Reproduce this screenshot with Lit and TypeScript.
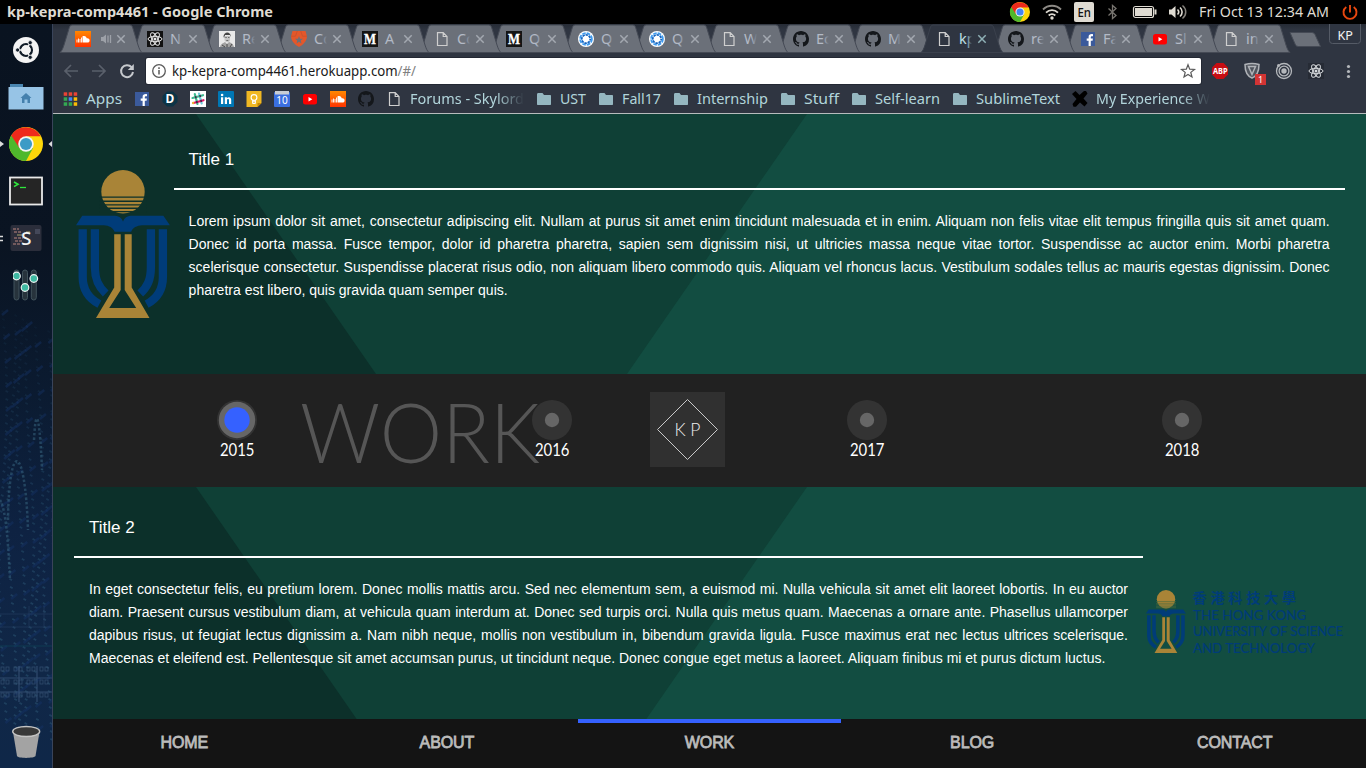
import { LitElement, html, svg, css } from "lit";
import { customElement } from "lit/decorators.js";

const UI = "'Noto Sans', 'Open Sans', sans-serif";

/* A single line of UI text fitted to a known advance width. */
const label = (t: unknown, w: number, size: number, fill: string, weight = 400, h = 22, base = 16) => html`
  <svg class="g" width=${w} height=${h} viewBox="0 0 ${w} ${h}">
    <text x="0" y=${base} font-family=${UI} font-size=${size} font-weight=${weight} fill=${fill}
      textLength=${w} lengthAdjust="spacingAndGlyphs">${t}</text>
  </svg>`;

const box = (w: number, h: number, body: unknown, vb = `0 0 ${w} ${h}`) =>
  html`<svg class="g" width=${w} height=${h} viewBox=${vb}>${body}</svg>`;

/* ---------- 16x16 glyphs ---------- */
const soundcloud = svg`<rect width="16" height="16" fill="url(#sc)"/>
  <path d="M2 8.5v3M3.5 7.5v4M5 8v3.500M6.500 6.500v5" stroke="#fff" stroke-width=".9"/>
  <path d="M7.500 5.300C10 4 11.500 6 11.700 7.300C13.500 6.800 14.600 8 14.600 9.400C14.600 10.700 13.700 11.500 12.600 11.500H7.500Z" fill="#fff"/>`;
const atom = (c: string) => svg`<g fill="none" stroke=${c} stroke-width="1">
  <ellipse cx="8" cy="8" rx="7" ry="2.700"/>
  <ellipse cx="8" cy="8" rx="7" ry="2.700" transform="rotate(60 8 8)"/>
  <ellipse cx="8" cy="8" rx="7" ry="2.700" transform="rotate(120 8 8)"/></g><circle cx="8" cy="8" r="1.500" fill=${c}/>`;
const reactIcon = svg`<rect width="16" height="16" fill="#111"/>${atom("#e8e8e8")}`;
const portrait = svg`<rect width="16" height="16" fill="#e9e9e9"/>
  <path d="M4.500 6C4.500 0 12 0 12 6L11 4H6L5.500 7Z" fill="#444"/>
  <path d="M5.500 5H11V9C11 12 6.500 12 5.500 9Z" fill="#c4c4c4"/>
  <path d="M6.300 6.500h1.500M9 6.500h1.500M7.300 9.500h2" stroke="#555" stroke-width=".8"/>
  <path d="M1 16C2 12 5 12 6 11L8 13L10 11C12 12 14 12 15 16Z" fill="#a2a2a2"/><path d="M8 13V16M3 14l3 2M13 13l-2 3" stroke="#333" stroke-width=".8"/>`;
const auth0 = svg`<path d="M1.500 0H14.500L16 5.500C15.500 10.500 12 13.800 8 16C4 13.800 .5 10.500 0 5.500Z" fill="#e4572a"/>
  <path d="M8 5L9 7.800H12L9.700 9.600L10.500 12.400L8 10.700L5.500 12.400L6.300 9.600L4 7.800H7Z" fill="#6b7079"/>
  <path d="M6.300 0L4.500 5.200H0M9.700 0L11.500 5.200H16" fill="none" stroke="#b8512f" stroke-width=".6"/>`;
const medium = svg`<rect width="16" height="16" fill="#141414"/>
  <text x="2" y="13" font-family="'Liberation Serif', serif" font-weight="700" font-size="14" fill="#fff" stroke="#fff" stroke-width=".3" textLength="12" lengthAdjust="spacingAndGlyphs">M</text>`;
const file = svg`<path d="M3.500 1.700H9.200L13 5.500V14.500H3.500Z M9.200 1.700V5.500H13" fill="none" stroke="#cfcfcf" stroke-width="1.200"/>`;
const quokka = svg`<circle cx="8" cy="8" r="8" fill="#fff"/>
  <circle cx="8" cy="8" r="5.900" fill="none" stroke="#3d9bf0" stroke-width="1.800" stroke-dasharray="3.600 1.030"/>
  <circle cx="8" cy="8" r="4.200" fill="none" stroke="#1565c0" stroke-width="1.700" stroke-dasharray="2.500 .8" stroke-dashoffset="1"/>`;
const github = svg`<path fill="#14171b" d="M8 0C3.580 0 0 3.580 0 8c0 3.540 2.290 6.530 5.470 7.590.4.070.55-.17.55-.38 0-.19-.01-.82-.01-1.490-2.010.37-2.530-.49-2.690-.94-.09-.23-.48-.94-.82-1.130-.28-.15-.68-.52-.01-.53.63-.01 1.080.58 1.230.82.72 1.210 1.870.87 2.330.66.07-.52.28-.87.51-1.070-1.780-.2-3.640-.89-3.640-3.950 0-.87.31-1.590.82-2.150-.08-.2-.36-1.020.08-2.120 0 0 .67-.21 2.200.82.64-.18 1.320-.27 2-.27s1.360.09 2 .27c1.530-1.040 2.200-.82 2.200-.82.44 1.100.16 1.920.08 2.120.51.56.82 1.270.82 2.150 0 3.070-1.870 3.750-3.650 3.950.29.25.54.73.54 1.480 0 1.070-.01 1.930-.01 2.200 0 .21.15.46.55.38A8.010 8.010 0 0 0 16 8c0-4.420-3.580-8-8-8Z"/>`;
const facebook = svg`<rect x="1" y="1" width="14" height="14" fill="#3b5a9b"/>
  <path d="M10.800 15V9.800H12.600L12.900 7.600H10.800V6.300C10.800 5.600 11.100 5.200 12 5.200H13V3.200C10.500 2.800 8.600 3.500 8.600 6V7.600H6.700V9.800H8.600V15Z" fill="#fff"/>`;
const youtube = svg`<rect x="1" y="3" width="14" height="10.500" rx="2.500" fill="#f00"/><path d="M6.500 6V10.500L10.300 8.250Z" fill="#fff"/>`;
const disqus = svg`<path d="M5 .5H11L15.500 5V11L11 15.500H5L.5 11V5Z" fill="#0c3446"/>
  <text x="8" y="12.300" text-anchor="middle" font-family=${UI} font-size="12" font-weight="700" fill="#fff">D</text>`;
const slack = svg`<rect width="16" height="16" fill="#fff"/><g stroke-width="2.200" stroke-linecap="round">
  <path d="M4.800 3L7.500 13" stroke="#3eb991"/><path d="M9 2.500L11.700 12.500" stroke="#70cadb"/>
  <path d="M2.500 7L13 4.200" stroke="#3eb991"/><path d="M3.500 12L13.500 9.200" stroke="#e01563"/></g>
  <path d="M5 6.400L6.500 6M9.400 5.200L10.900 4.800M6 11.300L7.700 10.900M10.400 10.100L11.900 9.700" stroke="#472a49" stroke-width="2.200"/>
  <circle cx="3.200" cy="12" r="1.200" fill="#ecb32d"/>`;
const linkedin = svg`<rect width="16" height="16" rx="1" fill="#0077b5"/>
  <path d="M3 6.200H5.200V13H3ZM6.800 6.200H8.900V7.200C10 5.500 13.200 5.700 13.200 8.800V13H11V9.300C11 7.400 9 7.500 9 9.300V13H6.800Z" fill="#fff"/><circle cx="4.100" cy="4" r="1.300" fill="#fff"/>`;
const keep = svg`<path d="M.5 0H15.500V12L11.500 16H.5Z" fill="#f0b823"/><path d="M15.500 12H11.500V16Z" fill="#c98a00"/>
  <circle cx="8" cy="6.500" r="2.900" fill="none" stroke="#fff" stroke-width="1.100"/><path d="M6.600 9.200V12.500H9.400V9.200M6.600 10.800H9.400" fill="none" stroke="#fff" stroke-width="1"/>`;
const calendar = svg`<rect x="0" y="1" width="16" height="15" rx="1" fill="#3a6fe0"/><rect x="1" y="0" width="14" height="3.500" fill="#c9cdd4"/>
  <text x="8" y="12.700" text-anchor="middle" font-family=${UI} font-size="10" fill="#fff">10</text>`;
const folder = svg`<path d="M1 3.500C1 2.500 1.500 2 2.500 2H6.500L8 4H14C14.700 4 15 4.400 15 5V13C15 13.700 14.700 14 14 14H2C1.300 14 1 13.700 1 13Z" fill="#95b7c0"/>`;
const cross = svg`<path d="M0 3L3.500 0L7.500 4L12 0H14L15.500 2.500L11.500 7.500L15.500 12L12.500 15.500L8 11.500L4 15.800H1.500L.5 13L4.500 8Z" fill="#000"/>`;
const grid = svg`${[0, 1, 2].map((r) => [0, 1, 2].map((c) => svg`<rect x=${1.7 + c * 5} y=${1.3 + r * 5} width="3.500" height="3.500"
  fill=${[["#ea4335", "#ea4335", "#ea4335"], ["#34a853", "#4285f4", "#fbbc05"], ["#34a853", "#34a853", "#fbbc05"]][r][c]}/>`))}`;

const chromeIcon = (size: number, core: string) => box(size, size, svg`
  <circle cx="16" cy="16" r="16" fill="#fdd60a"/>
  <path d="M16 16L2.100 8A16 16 0 0 0 16 32L22.500 20Z" fill="#4fb82c"/>
  <path d="M2.100 8A16 16 0 0 1 29.900 8.800H16L9.800 19.800Z" fill="#ee2a1c"/>
  <circle cx="16" cy="16" r="7.300" fill="#f4f4f4"/><circle cx="16" cy="16" r="5.700" fill=${core}/>`, "0 0 32 32");

/* University emblem, drawn on its own 94x148 field. */
const emblem = (w: number, h: number, stripe: string) => box(w, h, svg`
  <g transform="translate(-76.300 -170)">
    <circle cx="123.300" cy="191.800" r="21.700" fill="#a98437"/>
    <path d="M100 197.100H147M100 201.300H147M100 204.900H147M100 208.300H147M100 211.600H147" stroke=${stripe} stroke-width="1.400"/>
    <path d="M82.500 215.800H115.500C119 216 122 218 123.300 221.500C124.600 218 127.600 216 131 215.800H163.700L170.200 225.300H142.500C137 225.700 133 227.700 131.500 231.700H114.800C113.300 227.700 109.500 225.700 104 225.300H76.300Z" fill="#003c79"/>
    <g fill="none" stroke="#003c79" stroke-width="8.300">
      <path d="M83 229.300V277C83 290 90 299 99.700 304.200"/><path d="M95.200 229.300V267C95.200 280 99 287 106 293.500"/>
      <path d="M163.200 229.300V277C163.200 290 156.600 299 146.900 304.200"/><path d="M151.200 229.300V267C151.200 280 147.600 287 140.600 293.500"/>
    </g>
    <path d="M114.500 234.300H121V290L109.500 308H136.500L125 290V234.300H132V287.500L149.800 318H96.300L114.500 287.500Z" fill="#a98437"/>
  </g>`, "0 0 94 148");

const tabs: [unknown, string][] = [
  [soundcloud, ""], [reactIcon, "N"], [portrait, "Re"], [auth0, "Co"], [medium, "A"], [file, "Co"], [medium, "Q"],
  [quokka, "Q"], [quokka, "Q"], [file, "W"], [github, "Ec"], [github, "M"], [file, "kp"], [github, "re"],
  [facebook, "Fa"], [youtube, "Sl"], [file, "in"],
];

const marks: [unknown, string, number][] = [
  [grid, "Apps", 36], [facebook, "", 0], [disqus, "", 0], [slack, "", 0], [linkedin, "", 0], [keep, "", 0],
  [calendar, "", 0], [youtube, "", 0], [soundcloud, "", 0], [github, "", 0], [file, "Forums - Skylord", 114],
  [folder, "UST", 26], [folder, "Fall17", 39], [folder, "Internship", 71], [folder, "Stuff", 35],
  [folder, "Self-learn", 65], [folder, "SublimeText", 84], [cross, "My Experience W", 114],
];

@customElement("desktop-bar")
class DesktopBar extends LitElement {
  static styles = css`
    :host { display: flex; justify-content: space-between; align-items: center; height: 24px; background: #000; padding: 0 8px 0 7px; }
    .g { display: block; flex: none; overflow: visible; }
    .tray { display: flex; align-items: center; gap: 12px; }
  `;
  render() {
    return html`${label("kp-kepra-comp4461 - Google Chrome", 266, 14.5, "#dfdbd2", 700, 24, 17)}
      <div class="tray">
        ${chromeIcon(20, "#4285f4")}
        ${box(20, 18, svg`<g fill="none" stroke="#dfdbd2" stroke-width="1.800"><path d="M1 6.500C6 1.500 14 1.500 19 6.500" stroke="#8d8a85"/><path d="M4 9.700C7.500 6.300 12.500 6.300 16 9.700"/><path d="M6.700 12.500C8.500 10.700 11.500 10.700 13.300 12.500"/></g><circle cx="10" cy="15" r="1.700" fill="#dfdbd2"/>`)}
        ${box(20, 20, svg`<rect width="20" height="20" rx="2" fill="#dfdbd2"/><text x="3.500" y="15" font-family=${UI} font-size="13" font-weight="500" fill="#111" textLength="13.500" lengthAdjust="spacingAndGlyphs">En</text>`)}
        ${box(13, 16, svg`<path d="M2.500 4.500L10 11.500L6.500 14.500V1.500L10 4.500L2.500 11.500" fill="none" stroke="#77746f" stroke-width="1.300"/>`)}
        ${box(26, 14, svg`<rect x="2.500" y="1.500" width="20" height="11" rx="2" fill="none" stroke="#dfdbd2" stroke-width="1.200"/><rect x="4" y="3" width="17" height="8" fill="#dfdbd2"/><rect x="23.500" y="4.500" width="2" height="5" fill="#dfdbd2"/>`)}
        ${box(18, 16, svg`<path d="M0 5.500H2.500L6.500 2V14L2.500 10.500H0Z" fill="#dfdbd2"/><path d="M8.500 5.500C10 7 10 9 8.500 10.500M11 3.500C13.800 6 13.800 10 11 12.500" fill="none" stroke="#dfdbd2" stroke-width="1.600"/><path d="M13.500 1.500C17.800 5 17.800 11 13.500 14.500" fill="none" stroke="#85827c" stroke-width="1.500"/>`)}
        ${label("Fri Oct 13 12:34 AM", 130, 14.5, "#dfdbd2", 400, 24, 17)}
        ${box(17, 17, svg`<path d="M5.300 3A6.500 6.500 0 1 0 12.700 3M9 1V8.500" fill="none" stroke="#e8470f" stroke-width="1.900"/>`)}
      </div>`;
  }
}

@customElement("launcher-dock")
class LauncherDock extends LitElement {
  static styles = css`
    :host { display: flex; flex-direction: column; box-sizing: border-box; width: 53px; border-right: 1px solid #39445a; padding: 2px 0 3px;
      position: relative; overflow: hidden;
      background: linear-gradient(#091320 0%, #0a1422 30%, #0b1b31 50%, #0e2242 68%, #102747 86%, #0f2748 100%); }
    .g { display: block; }
    .slot { height: 47px; display: flex; align-items: center; justify-content: center; position: relative; z-index: 1; }
    .grow { flex: 1; }
    .wall { position: absolute; left: 0; top: 0; }
  `;
  render() {
    const dots = [];
    for (let c = 0; c < 7; c++) {
      for (let r = 0; r < 52; r++) {
        const y = 310 + r * 8 + c * 4;
        const x = (c * 9 + Math.sin(r / 7 + c * 1.3) * 4 + 2).toFixed(1);
        dots.push(svg`<rect x=${x} y=${y} width="3" height="1.800" fill="#28506e" opacity=${(Math.min(0.6, 0.1 + r / 70)).toFixed(2)} transform="rotate(30 ${x} ${y})"/>`);
        if ((r + c) % 3 === 0) dots.push(svg`<path d="M${x} ${y + 5}l6 -5" stroke="#16356b" stroke-width="2.500" opacity=".4"/>`);
      }
    }
    const cells = [0, 1, 2, 3].map((c) => [0, 1, 2].map((r) => svg`<rect x=${1 + c * 13} y=${647 + r * 13} width="3" height="4"/><rect x=${6 + c * 13} y=${647 + r * 13} width="3" height="4"/>`));
    return html`
      <svg class="wall" width="52" height="744" viewBox="0 24 52 744">
        ${dots}
        <path d="M8 520C9 440 25 440 28 530M34 440C36 400 40 420 42 470M0 500C6 510 8 540 10 580" fill="none" stroke="#3a6a84" stroke-width="2.500" stroke-dasharray="2.500 2" opacity=".5"/>
        <path d="M0 678H52M0 692H52M19 666V702M37 666V702" stroke="#3a567b" stroke-width="1.200" opacity=".75"/>
        <path d="M0 614H52M0 627H52M29 606V628M44 606V628" stroke="#2b4468" opacity=".5"/>
        <path d="M0 646H52" stroke="#0f4a5a" opacity=".6"/>
        <g fill="none" stroke="#3d5a7c" stroke-width=".8" opacity=".7" transform="translate(0 20)">${cells}</g>
        <path d="M0 141L4 144L0 147ZM52 141L48.500 144L52 147Z" fill="#dcdcdc"/>
        <path d="M0 236.500H3M0 240.500H3" stroke="#dcdcdc" stroke-width="1.500"/>
      </svg>
      <div class="slot">${box(26, 26, svg`<circle cx="13" cy="13" r="13" fill="#f4f4f4"/><circle cx="13" cy="13" r="5.900" fill="none" stroke="#111c28" stroke-width="2.300"/>
        <path d="M13 13L4 13M13 13L17.500 5.200M13 13L17.500 20.800" stroke="#f4f4f4" stroke-width="1.500"/><circle cx="13" cy="13" r="4.700" fill="#f4f4f4"/>
        <g fill="#111c28" stroke="#f4f4f4" stroke-width=".8"><circle cx="4.600" cy="13" r="2.100"/><circle cx="17.200" cy="5.700" r="2.100"/><circle cx="17.200" cy="20.300" r="2.100"/></g>`)}</div>
      <div class="slot">${box(36, 28, svg`<path d="M2 1H15V6H2Z" fill="#4a86b0"/><rect x=".5" y="4" width="35" height="22.500" fill="#97c4e6"/><path d="M18 10L23.500 15H22V20H19.500V16.500H16.500V20H14V15H12.500Z" fill="#4580ad"/>`)}</div>
      <div class="slot">${chromeIcon(34, "#3c9bc6")}</div>
      <div class="slot">${box(34, 30, svg`<rect x="1" y="1.500" width="32" height="27" fill="#252525" stroke="#e9e9e9" stroke-width="1.800"/><path d="M5 6L9 8.300L5 10.600" fill="none" stroke="#2ee63c" stroke-width="1.600"/><path d="M11 11.500H17" stroke="#2ee63c" stroke-width="1.300"/>`)}</div>
      <div class="slot">${box(32, 28, svg`<rect x=".5" y="1" width="31" height="26" rx="2" fill="#2b2e3b"/><path d="M3 5H9M4 8H12M4 14H13M5 17H12M3 20H11" stroke="#8c6a6a" stroke-width="1.500" stroke-dasharray="3 1"/><path d="M7 11H12M16 8H20" stroke="#a9a26c"/><rect x="25" y="5" width="5" height="5" fill="#444859"/><text x="11" y="21" font-family=${UI} font-weight="500" font-size="18.500" fill="#f2f2f2" textLength="10.500" lengthAdjust="spacingAndGlyphs">S</text>`)}</div>
      <div class="slot">${box(26, 32, svg`<g transform="translate(-.5 0)"><g fill="#27333c" stroke="#41535c"><rect x="1.500" y="1" width="5" height="30" rx="2.500"/><rect x="10" y="1" width="5" height="30" rx="2.500"/><rect x="18.800" y="1" width="5" height="30" rx="2.500"/></g><g fill="#3fb9a2" stroke="#eef4f2" stroke-width="1.200"><circle cx="4" cy="7" r="3.800"/><circle cx="12.500" cy="18.500" r="3.800"/><circle cx="21.300" cy="9.500" r="3.800"/></g></g>`)}</div>
      <div class="grow"></div>
      <div class="slot">${box(30, 34, svg`<path d="M2 7L6 31C7 33.500 23 33.500 24.500 31L28.500 7Z" fill="#a3a3a3"/><ellipse cx="15.200" cy="6.500" rx="13.500" ry="5" fill="#383838" stroke="#c4c4c4" stroke-width="1.400"/>`)}</div>`;
  }
}

@customElement("browser-chrome")
class BrowserChrome extends LitElement {
  static styles = css`
    :host { display: block; box-sizing: border-box; height: 90px; background: #2f3541; border-bottom: 1px solid #b7bcbd; overflow: hidden; }
    .g { display: block; flex: none; overflow: visible; }
    .strip { display: flex; height: 29px; padding-left: 7.300px; background: linear-gradient(#262b35, #2f3541 6px); }
    .tab { position: relative; margin-right: -10.250px; }
    .tools { display: flex; height: 36px; align-items: center; }
    .nav { display: flex; gap: 12px; width: 93px; padding-left: 10px; box-sizing: border-box; }
    .omni { display: flex; align-items: center; justify-content: space-between; box-sizing: border-box; width: 1055px; height: 26px; padding: 0 5px 0 5px;
      background: #fff; border-radius: 2px; box-shadow: 0 0 0 1px #232833; }
    .url { display: flex; align-items: center; gap: 5px; }
    .path { fill: #808080; }
    .ext { display: flex; gap: 8px; padding-left: 7px; }
    .marks { display: flex; gap: 12px; align-items: center; height: 20px; padding-left: 9px; }
    .mark { display: flex; gap: 8px; align-items: center; }
    .fade { -webkit-mask-image: linear-gradient(90deg, #000 75%, transparent 100%); mask-image: linear-gradient(90deg, #000 75%, transparent 100%); }
  `;
  render() {
    return html`
      <div class="strip">
        ${tabs.map(([icon, t], i) => {
          const on = i === 12;
          return html`<svg class="g tab" style="z-index:${on ? 30 : i > 12 ? 16 - i + 5 : 20 - i}" width="82" height="29" viewBox="0 0 82 29">
            <defs>
              <linearGradient id="sc" x1="0" y1="0" x2="0" y2="1"><stop offset="0" stop-color="#ff8800"/><stop offset="1" stop-color="#ff3300"/></linearGradient>
              <linearGradient id=${on ? "tf-on" : "tf"} gradientUnits="userSpaceOnUse" x1="38" x2="51" y1="0" y2="0"><stop offset=".55" stop-color=${on ? "#bfe0e6" : "#b3bac6"}/><stop offset="1" stop-color=${on ? "#bfe0e6" : "#b3bac6"} stop-opacity="0"/></linearGradient>
            </defs>
            <path d="M0 28.500C2 27 3 24 4 21L9.500 3Q10.300 1 12 1H70Q71.700 1 72.500 3L78 21C79 24 80 27 82 28.500Z" fill=${on ? "#2f3541" : "#6b7079"} stroke=${on ? "#3b414d" : "#454a55"} stroke-width="1"/>
            <g transform="translate(15 7)">${icon}</g>
            ${t ? svg`<text x="38" y="20" font-family=${UI} font-size="14.500" fill=${on ? "url(#tf-on)" : "url(#tf)"}>${t}</text>`
                : svg`<path d="M41 13H43L46 10.500V19.500L43 17H41Z" fill="#9da1a8"/><path d="M48 11.500V18.500M50.500 11V19" stroke="#9da1a8" stroke-width="1.300"/>`}
            <path d="M57.300 11.300L64.700 18.700M64.700 11.300L57.300 18.700" stroke=${on ? "#8fb0b6" : "#a3a8b0"} stroke-width="1.500"/>
          </svg>`;
        })}
        ${box(90, 29, svg`<path d="M10 8.500H32Q34 8.500 35 10.500L40.500 22.500H18.500Q16.500 22.500 15.500 21Z" fill="#6b7079" stroke="#454a55"/>
          <rect x="49.500" y="-3" width="31" height="22.500" rx="3" fill="#2f3541" stroke="#555b66"/>
          <text x="57.500" y="16" font-family=${UI} font-size="12" fill="#f2f2f2" textLength="15.500" lengthAdjust="spacingAndGlyphs">KP</text>`)}
      </div>
      <div class="tools">
        <div class="nav">
          ${box(16, 16, svg`<path d="M15 8H2M8 2L2 8L8 14" fill="none" stroke="#5a606b" stroke-width="1.700"/>`)}
          ${box(16, 16, svg`<path d="M1 8H14M8 2L14 8L8 14" fill="none" stroke="#5a606b" stroke-width="1.700"/>`)}
          ${box(16, 16, svg`<path d="M12.600 4.200A6 6 0 1 0 14 9" fill="none" stroke="#c6c9cd" stroke-width="2"/><path d="M14.800 1V7H8.800Z" fill="#c6c9cd"/>`)}
        </div>
        <div class="omni">
          <div class="url">
            ${box(16, 16, svg`<circle cx="8" cy="8" r="6.300" fill="none" stroke="#5a5a5a" stroke-width="1.300"/><path d="M8 7V11.500M8 4.300V5.900" stroke="#5a5a5a" stroke-width="1.500"/>`)}
            ${label(svg`kp-kepra-comp4461.herokuapp.com<tspan class="path">/#/</tspan>`, 244, 14.5, "#1a1a1a")}
          </div>
          ${box(16, 16, svg`<path d="M8 1.700L9.700 6.100L14.500 6.400L10.800 9.400L12 14L8 11.400L4 14L5.200 9.400L1.500 6.400L6.300 6.100Z" fill="none" stroke="#5a5a5a" stroke-width="1.200"/>`)}
        </div>
        <div class="ext">
          ${box(24, 28, svg`<path d="M8.500 6H15.500L20 10.500V17.500L15.500 22H8.500L4 17.500V10.500Z" fill="#c70d12"/><text x="5" y="17.200" font-family=${UI} font-size="9" font-weight="700" fill="#fff" textLength="14.500" lengthAdjust="spacingAndGlyphs">ABP</text>`)}
          ${box(24, 28, svg`<path d="M5 7.500Q12 5.500 19 7.500C19 14 17 19 12 21C7 19 5 14 5 7.500Z" fill="#50555e" stroke="#b0b3b8" stroke-width="1.500"/><path d="M8.500 9.500H15.500L12 17.500Z" fill="none" stroke="#b0b3b8" stroke-width="1.500"/><rect x="15" y="17" width="11" height="11" fill="#d23434"/><text x="18" y="26" font-family=${UI} font-size="9" fill="#fff">1</text>`)}
          ${box(24, 28, svg`<g fill="none" stroke="#b4b7bb" stroke-width="1.300"><circle cx="12" cy="14" r="7.500"/><circle cx="12" cy="14" r="4.900"/></g><circle cx="12" cy="14" r="2.700" fill="#b4b7bb"/><circle cx="6.500" cy="8.500" r="1.500" fill="#b4b7bb"/>`)}
          ${box(24, 28, svg`<rect x="4" y="6" width="16" height="16" fill="#262b35"/><g transform="translate(4 6)">${atom("#d7dadd")}</g>`)}
          ${box(24, 28, svg`<g fill="#b4b7bb"><circle cx="12.500" cy="9.500" r="1.600"/><circle cx="12.500" cy="14.500" r="1.600"/><circle cx="12.500" cy="19.500" r="1.600"/></g>`)}
        </div>
      </div>
      <div class="marks">
        ${marks.map(([icon, t, w]) => html`<div class="mark">${box(16, 16, icon)}${t ? html`<div class=${w === 114 ? "fade" : ""}>${label(t, w, 14.5, "#b2d5db")}</div>` : ""}</div>`)}
      </div>`;
  }
}

@customElement("portfolio-page")
class PortfolioPage extends LitElement {
  static styles = css`
    :host { display: flex; flex-direction: column; height: 654px; font-family: "Liberation Sans", Arial, sans-serif; color: #fff; }
    .g { display: block; flex: none; overflow: visible; }
    .panel { display: flex; position: relative; box-sizing: border-box; padding: 0 21px; overflow: hidden; background: #0f4036; }
    .first { height: 260px; }
    .second { height: 232px; }
    .backdrop { position: absolute; left: 0; top: 0; }
    .copy { flex: 1; position: relative; }
    .first .copy { padding-top: 30px; }
    .second .copy { padding-top: 25px; }
    .title { height: 44px; padding: 0 15px; line-height: 31px; font-size: 17px; border-bottom: 2px solid #fff; }
    .body { margin: 0; padding: 20px 15px 0; font-size: 14px; line-height: 23px; text-align: justify; }
    .first .title, .first .body { padding-left: 14.600px; padding-right: 15.400px; }
    .crest { position: relative; width: 100px; padding: 56px 0 0 2px; box-sizing: border-box; }
    .brand { position: relative; display: flex; gap: 6px; width: 202px; box-sizing: border-box; padding: 103px 0 0 3px; }
    .timeline { display: flex; position: relative; height: 113px; box-sizing: border-box; background: #212121; padding: 26px 0 0 26px; }
    .big { position: absolute; left: 240px; top: 15px; }
    .logo { position: absolute; left: 597px; top: 18px; }
    .stop { flex: none; width: 315px; display: flex; flex-direction: column; align-items: center; position: relative; }
    .tabs { display: grid; grid-template-columns: repeat(5, 1fr); height: 49px; background: #141414; }
    .tab { display: flex; align-items: center; justify-content: center; box-sizing: border-box; border-top: 4px solid transparent; padding-bottom: 5px;
      color: #bbb; font-size: 16px; letter-spacing: -.1px; -webkit-text-stroke: .8px #bbb; }
    .on { border-top-color: #3561ff; }
  `;
  backdrop() {
    return html`<svg class="g backdrop" width="1313" height="260" viewBox="0 0 1313 260">
      <path d="M0 0H143L323 260H0Z" fill="#0c302a"/>
      <path d="M754 0H1313V260H574Z" fill="#124d41"/>
    </svg>`;
  }
  render() {
    const years = ["2015", "2016", "2017", "2018"];
    const en: [string, number, number][] = [["THE HONG KONG", 113, 30], ["UNIVERSITY OF SCIENCE", 150, 46.3], ["AND TECHNOLOGY", 122, 62.5]];
    return html`
      <section class="panel first">
        ${this.backdrop()}
        <div class="crest">${emblem(94, 148, "#0c302a")}</div>
        <div class="copy">
          <div class="title">Title 1</div>
          <p class="body">Lorem ipsum dolor sit amet, consectetur adipiscing elit. Nullam at purus sit amet enim tincidunt malesuada et in enim. Aliquam non felis vitae elit tempus fringilla quis sit amet quam. Donec id porta massa. Fusce tempor, dolor id pharetra pharetra, sapien sem dignissim nisi, ut ultricies massa neque vitae tortor. Suspendisse ac auctor enim. Morbi pharetra scelerisque consectetur. Suspendisse placerat risus odio, non aliquam libero commodo quis. Aliquam vel rhoncus lacus. Vestibulum sodales tellus ac mauris egestas dignissim. Donec pharetra est libero, quis gravida quam semper quis.</p>
        </div>
      </section>
      <section class="timeline">
        <svg class="g big" width="260" height="90" viewBox="0 0 260 90">
          <text x="7" y="74" font-family="Lato, sans-serif" font-weight="300" font-size="83" fill="#565656" textLength="240" lengthAdjust="spacingAndGlyphs">WORK</text>
        </svg>
        <svg class="g logo" width="75" height="75" viewBox="0 0 75 75">
          <rect width="75" height="75" fill="#303030"/>
          <path d="M37.500 7.500L67.500 37.500L37.500 67.500L7.500 37.500Z" fill="none" stroke="#c8c8c8"/>
          <text x="24.500" y="43.500" font-family="Lato, sans-serif" font-weight="300" font-size="18.500" fill="#eee" textLength="26" lengthAdjust="spacingAndGlyphs">K P</text>
        </svg>
        ${years.map((y, i) => html`<div class="stop">${box(40, 62, svg`
          <circle cx="20" cy="20" r="20" fill="#333"/>
          ${i === 0 ? svg`<circle cx="20" cy="20" r="18.200" fill="#666"/><circle cx="20" cy="20" r="12.700" fill="#3561ff"/>` : svg`<circle cx="20" cy="20" r="7.200" fill="#666"/>`}
          <text x="3" y="56" font-family="Lato, sans-serif" font-size="16.500" fill="#fff" textLength="34.500" lengthAdjust="spacingAndGlyphs">${y}</text>`)}</div>`)}
      </section>
      <section class="panel second">
        ${this.backdrop()}
        <div class="copy">
          <div class="title">Title 2</div>
          <p class="body">In eget consectetur felis, eu pretium lorem. Donec mollis mattis arcu. Sed nec elementum sem, a euismod mi. Nulla vehicula sit amet elit laoreet lobortis. In eu auctor diam. Praesent cursus vestibulum diam, at vehicula quam interdum at. Donec sed turpis orci. Nulla quis metus quam. Maecenas a ornare ante. Phasellus ullamcorper dapibus risus, ut feugiat lectus dignissim a. Nam nibh neque, mollis non vestibulum in, bibendum gravida ligula. Fusce maximus erat nec lectus ultrices scelerisque. Maecenas et eleifend est. Pellentesque sit amet accumsan purus, ut tincidunt neque. Donec congue eget metus a laoreet. Aliquam finibus mi et purus dictum luctus.</p>
        </div>
        <div class="brand">
          ${emblem(40, 63, "#4b6a3c")}
          <svg class="g" width="152" height="68" viewBox="0 0 152 68">
            <text x="0.500" y="13" font-family="'Noto Sans CJK TC', sans-serif" font-size="14" font-weight="700" fill="#003c79" textLength="103.500">香港科技大學</text>
            ${en.map(([t, w, y]) => svg`<text x="1" y=${y} font-family="Lato, sans-serif" font-size="13.800" fill="#003c79" stroke="#003c79" stroke-width=".2" textLength=${w} lengthAdjust="spacingAndGlyphs">${t}</text>`)}
          </svg>
        </div>
      </section>
      <nav class="tabs">
        ${["HOME", "ABOUT", "WORK", "BLOG", "CONTACT"].map((t) => html`<div class="tab ${t === "WORK" ? "on" : ""}">${t}</div>`)}
      </nav>`;
  }
}

@customElement("app-root")
class AppRoot extends LitElement {
  static styles = css`
    :host { display: block; width: 1366px; height: 768px; overflow: hidden; background: #000; }
    .desk { display: grid; grid-template-columns: 53px 1313px; height: 744px; }
    .window { min-width: 0; }
  `;
  render() {
    return html`<desktop-bar></desktop-bar>
      <div class="desk">
        <launcher-dock></launcher-dock>
        <div class="window"><browser-chrome></browser-chrome><portfolio-page></portfolio-page></div>
      </div>`;
  }
}
